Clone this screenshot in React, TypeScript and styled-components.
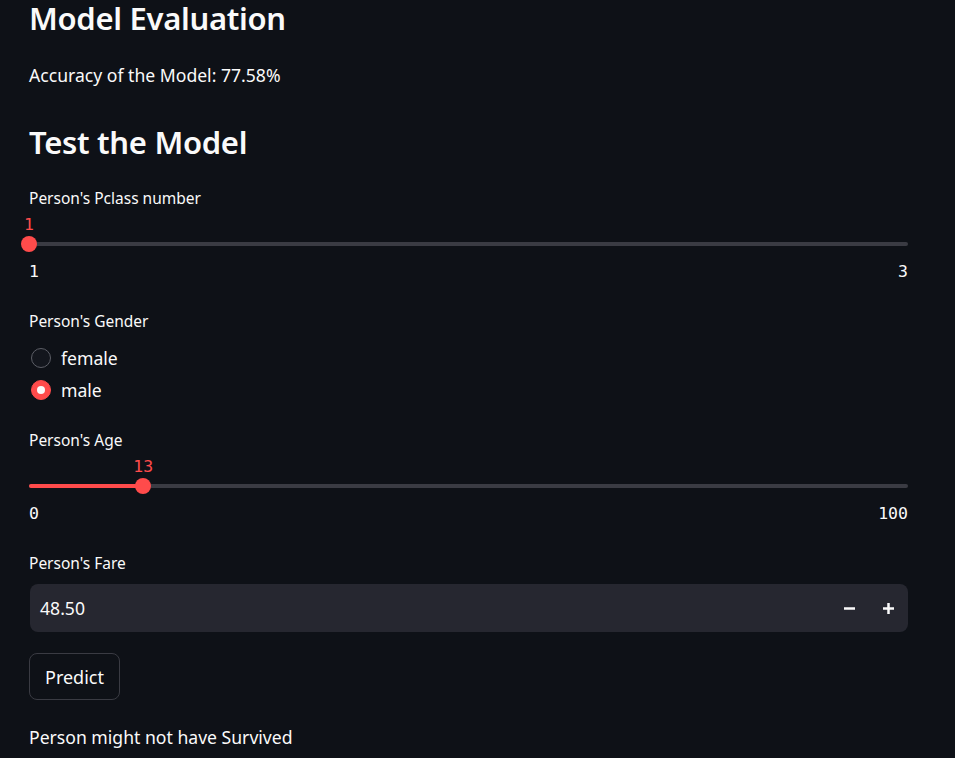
import React from "react";
import styled, { createGlobalStyle } from "styled-components";

const Global = createGlobalStyle`
  html, body { margin: 0; padding: 0; background: #0e1117; }
  body { font-family: "Noto Sans", sans-serif; color: #fafafa; }
`;

const Page = styled.div`
  width: 955px;
  height: 758px;
  overflow: hidden;
  background: #0e1117;
  box-sizing: border-box;
  padding: 0 47px 0 29px;
  display: flex;
  flex-direction: column;
`;

const H2 = styled.h2<{ $top: number }>`
  margin: ${(p) => p.$top}px 0 0;
  font-size: 31px;
  font-weight: 600;
  line-height: 36px;
  letter-spacing: -0.3px;
`;

const Para = styled.p<{ $top: number }>`
  margin: ${(p) => p.$top}px 0 0;
  font-size: 17.6px;
  line-height: 24px;
`;

const Label = styled.div<{ $top: number }>`
  margin-top: ${(p) => p.$top}px;
  font-size: 15.5px;
  line-height: 22px;
`;

const SliderWrap = styled.div`
  display: flex;
  flex-direction: column;
  margin-top: 3px;
`;

const ValueRow = styled.div`
  position: relative;
  height: 22px;
`;

const ThumbValue = styled.span`
  position: absolute;
  top: 2px;
  transform: translateX(-50%);
  font-family: "DejaVu Sans Mono", monospace;
  font-size: 16.5px;
  line-height: 22px;
  color: #ff4b4b;
`;

const Track = styled.div`
  position: relative;
  height: 4px;
  margin-top: 8px;
  border-radius: 2px;
  background: #3a3b43;
`;

const Fill = styled.div`
  position: absolute;
  left: 0;
  top: 0;
  height: 4px;
  border-radius: 2px;
  background: #ff4b4b;
`;

const Thumb = styled.div`
  position: absolute;
  top: -6px;
  width: 16px;
  height: 16px;
  margin-left: -8px;
  border-radius: 50%;
  background: #ff4b4b;
`;

const MinMax = styled.div`
  display: flex;
  justify-content: space-between;
  margin-top: 15px;
  font-family: "DejaVu Sans Mono", monospace;
  font-size: 16.5px;
  line-height: 22px;
  color: #fafafa;
`;

const RadioGroup = styled.div`
  display: flex;
  flex-direction: column;
  gap: 10px;
  margin-top: 15px;
  padding-left: 2px;
`;

const RadioRow = styled.label`
  display: flex;
  align-items: center;
  gap: 10px;
  font-size: 17.6px;
  line-height: 22px;
`;

const RadioDot = styled.span<{ $on: boolean }>`
  width: 20px;
  height: 20px;
  box-sizing: border-box;
  border-radius: 50%;
  display: flex;
  align-items: center;
  justify-content: center;
  background: ${(p) => (p.$on ? "#ff4b4b" : "#13161d")};
  border: 1px solid ${(p) => (p.$on ? "#ff4b4b" : "#5c5e66")};
  &::after {
    content: "";
    display: ${(p) => (p.$on ? "block" : "none")};
    width: 8px;
    height: 8px;
    border-radius: 50%;
    background: #fafafa;
  }
`;

const NumberBox = styled.div`
  margin-top: 10px;
  margin-left: 1px;
  height: 48px;
  border-radius: 8px;
  background: #262730;
  display: flex;
  align-items: center;
  padding: 0 0 0 10px;
`;

const NumberValue = styled.span`
  flex: 1;
  font-size: 17.6px;
`;

const StepButton = styled.button`
  width: 39px;
  height: 48px;
  border: none;
  background: transparent;
  color: #fafafa;
  display: flex;
  align-items: center;
  justify-content: center;
  padding: 0;
`;

const Button = styled.button`
  margin-top: 21px;
  align-self: flex-start;
  height: 47px;
  padding: 0 15px;
  border-radius: 8px;
  border: 1px solid #3a3b43;
  background: #0e1117;
  color: #fafafa;
  font-family: "Noto Sans", sans-serif;
  font-size: 18px;
`;

type SliderProps = { min: number; max: number; value: number };

function Slider({ min, max, value }: SliderProps) {
  const pct = ((value - min) / (max - min)) * 100;
  return (
    <SliderWrap>
      <ValueRow>
        <ThumbValue style={{ left: `${pct}%` }}>{value}</ThumbValue>
      </ValueRow>
      <Track>
        <Fill style={{ width: `${pct}%` }} />
        <Thumb style={{ left: `${pct}%` }} />
      </Track>
      <MinMax>
        <span>{min}</span>
        <span>{max}</span>
      </MinMax>
    </SliderWrap>
  );
}

const MinusIcon = () => (
  <svg width="11" height="11" viewBox="0 0 11 11">
    <rect x="0" y="4.25" width="11" height="2.5" fill="#fafafa" />
  </svg>
);

const PlusIcon = () => (
  <svg width="11" height="11" viewBox="0 0 11 11">
    <rect x="0" y="4.25" width="11" height="2.5" fill="#fafafa" />
    <rect x="4.25" y="0" width="2.5" height="11" fill="#fafafa" />
  </svg>
);

export default function App() {
  return (
    <>
      <Global />
      <Page>
        <H2 $top={0}>Model Evaluation</H2>
        <Para $top={27}>Accuracy of the Model: 77.58%</Para>
        <H2 $top={37}>Test the Model</H2>
        <Label $top={27}>Person's Pclass number</Label>
        <Slider min={1} max={3} value={1} />
        <Label $top={27}>Person's Gender</Label>
        <RadioGroup>
          <RadioRow>
            <RadioDot $on={false} />
            female
          </RadioRow>
          <RadioRow>
            <RadioDot $on={true} />
            male
          </RadioRow>
        </RadioGroup>
        <Label $top={28}>Person's Age</Label>
        <Slider min={0} max={100} value={13} />
        <Label $top={27}>Person's Fare</Label>
        <NumberBox>
          <NumberValue>48.50</NumberValue>
          <StepButton aria-label="decrement">
            <MinusIcon />
          </StepButton>
          <StepButton aria-label="increment">
            <PlusIcon />
          </StepButton>
        </NumberBox>
        <Button>Predict</Button>
        <Para $top={25}>Person might not have Survived</Para>
      </Page>
    </>
  );
}
